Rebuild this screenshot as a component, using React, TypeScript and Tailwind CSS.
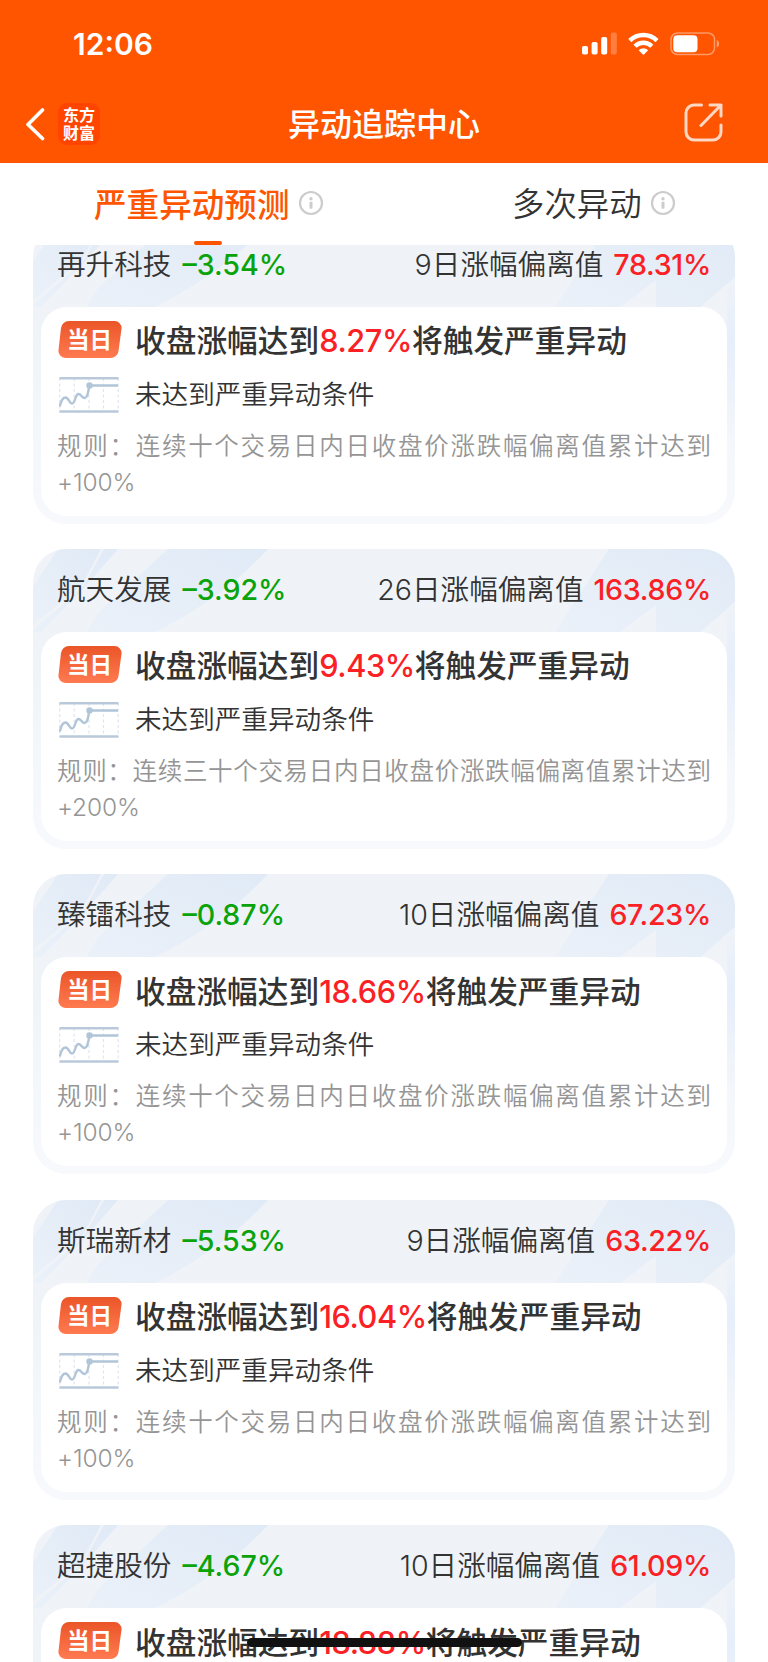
interface Stock {
    name: string;
    change: string;
    days: number;
    deviation: string;
    trigger: string;
    rule: string;
    limit: string;
}

const TEN_DAY_RULE = "规则：连续十个交易日内日收盘价涨跌幅偏离值累计达到";
const THIRTY_DAY_RULE = "规则：连续三十个交易日内日收盘价涨跌幅偏离值累计达到";

const stocks: Stock[] = [
    { name: "再升科技", change: "–3.54%", days: 9, deviation: "78.31%", trigger: "8.27%", rule: TEN_DAY_RULE, limit: "+100%" },
    { name: "航天发展", change: "–3.92%", days: 26, deviation: "163.86%", trigger: "9.43%", rule: THIRTY_DAY_RULE, limit: "+200%" },
    { name: "臻镭科技", change: "–0.87%", days: 10, deviation: "67.23%", trigger: "18.66%", rule: TEN_DAY_RULE, limit: "+100%" },
    { name: "斯瑞新材", change: "–5.53%", days: 9, deviation: "63.22%", trigger: "16.04%", rule: TEN_DAY_RULE, limit: "+100%" },
    { name: "超捷股份", change: "–4.67%", days: 10, deviation: "61.09%", trigger: "18.88%", rule: TEN_DAY_RULE, limit: "+100%" },
];

function StatusIcons() {
    return (
        <svg width="138" height="24" viewBox="0 0 138 24" fill="none">
            <rect x="0" y="14" width="6" height="8.5" rx="1.8" fill="#fff" />
            <rect x="9.6" y="10" width="6" height="12.5" rx="1.8" fill="#fff" />
            <rect x="19.2" y="5" width="6" height="17.5" rx="1.8" fill="#fff" />
            <rect x="28.8" y="0.5" width="6" height="22" rx="1.8" fill="#fff" fillOpacity="0.25" />
            <g stroke="#fff" strokeWidth="4.4">
                <path d="M47.8 8.6a19.4 19.4 0 0 1 27.2 0" />
                <path d="M53 14.2a12 12 0 0 1 16.8 0" />
            </g>
            <path d="M56.6 18.2a7 7 0 0 1 9.6 0L61.4 23z" fill="#fff" />
            <rect x="89" y="1" width="43.5" height="21.5" rx="6.5" stroke="#fff" strokeOpacity="0.4" strokeWidth="1.5" />
            <rect x="91.3" y="3.2" width="24.2" height="17" rx="4" fill="#fff" />
            <path d="M134.8 8c3 1 3 6.500 0 7.500z" fill="#fff" fillOpacity="0.45" />
        </svg>
    );
}

function BackIcon() {
    return (
        <svg width="20" height="34" viewBox="0 0 20 34" fill="none" stroke="#fff" strokeWidth="3.6" strokeLinecap="round" strokeLinejoin="round">
            <path d="M17.500 3 3 17.500l14.500 14" />
        </svg>
    );
}

function ShareIcon() {
    return (
        <svg width="40" height="40" viewBox="0 0 40 40" fill="none" stroke="#ffd8c4" strokeWidth="3" strokeLinecap="round" strokeLinejoin="round">
            <path d="M17.500 2H10a8 8 0 0 0-8 8v19a8 8 0 0 0 8 8h19a8 8 0 0 0 8-8v-7" />
            <path d="M26 2h11v11M37 2 17 22.500" />
        </svg>
    );
}

function InfoIcon() {
    return (
        <svg width="26" height="26" viewBox="0 0 26 26" fill="none">
            <circle cx="13" cy="13" r="11" stroke="#ccc" strokeWidth="2.2" />
            <circle cx="13" cy="8.700" r="1.700" fill="#ccc" />
            <rect x="11.500" y="11.800" width="3" height="7" rx="1" fill="#ccc" />
        </svg>
    );
}

function TodayBadge() {
    return (
        <div className="relative h-[37px] w-[64px]">
            <svg className="absolute inset-0" width="64" height="37" viewBox="0 0 64 37">
                <defs>
                    <linearGradient id="badge" x1="0" y1="0" x2="0" y2="1">
                        <stop offset="0" stopColor="#ea5528" />
                        <stop offset="1" stopColor="#ff7a50" />
                    </linearGradient>
                </defs>
                <path d="M11 0h45.500a7 7 0 0 1 7 8l-3 22a8 8 0 0 1-8 7H7.500a7 7 0 0 1-7-8l2.500-22a8 8 0 0 1 8-7z" fill="url(#badge)" />
            </svg>
            <span className="relative block pl-[9px] text-[22.5px] leading-[38px] font-bold text-white">当日</span>
        </div>
    );
}

function TrendIcon() {
    return (
        <svg width="60" height="36" viewBox="0 0 60 36" fill="none">
            <path d="M.7 1v34M15.200 1v34M30 1v34M44.500 1v34M59.200 1v34" stroke="#dfe5f0" strokeWidth="1.200" strokeDasharray="3 2.500" />
            <path d="M.5 1.200h59M.5 34.500h59" stroke="#b9c9da" strokeWidth="2.400" />
            <path d="M.8 29.500C2 24 4 20.500 6.500 20.500c3.500 0 3.500 6 6.500 6 3.500 0 3-9.500 6.500-9.500 3 0 3.500 4 6 4 3.500 0 3.500-7 5-12.500H59" stroke="#b0c5d8" strokeWidth="2.400" />
            <circle cx="30.500" cy="8.500" r="3.200" fill="#b0c5d8" />
        </svg>
    );
}

function CardArtwork() {
    return (
        <svg className="absolute inset-0" width="702" height="300" viewBox="0 0 702 300">
            <defs>
                <linearGradient id="base" x1="0" y1="0" x2="0" y2="1">
                    <stop offset="0" stopColor="#eff3f8" />
                    <stop offset="0.4" stopColor="#f0f4f9" />
                    <stop offset="1" stopColor="#f7f9fc" />
                </linearGradient>
                <linearGradient id="band" x1="1" y1="0" x2="0" y2="1">
                    <stop offset="0" stopColor="#e0eaf6" />
                    <stop offset="1" stopColor="#ebf1f9" />
                </linearGradient>
                <linearGradient id="edge" x1="0" y1="0" x2="0" y2="1">
                    <stop offset="0" stopColor="#eff3f9" />
                    <stop offset="0.4" stopColor="#e6eefa" />
                    <stop offset="1" stopColor="#f3f6fb" />
                </linearGradient>
            </defs>
            <rect width="702" height="300" fill="url(#base)" />
            <path d="M25 0h43L49 36 0 76V38z" fill="url(#band)" />
            <path d="M71 0h14L50 40 8 83H0v-2l50-43z" fill="url(#band)" />
            <path d="M135 0h100q-46 50-113 83H54q10-22 24-30z" fill="url(#band)" />
            <path d="M576 0h126v53l-35 30h-44V56l-36 27h-65z" fill="url(#band)" />
            <path d="M702 53v160h-8V60z" fill="url(#edge)" />
        </svg>
    );
}

function StockCard({ stock }: { stock: Stock }) {
    return (
        <article className="relative h-[300px] shrink-0 overflow-hidden rounded-[33px]">
            <CardArtwork />
            <div className="relative px-2">
                <header className="flex h-[83px] items-center justify-between pr-4 pl-4 text-[28.6px] font-[350]">
                    <h2 className="flex items-center gap-[11px]">
                        <span>{stock.name}</span>
                        <span className="font-medium text-[#0aa30a]">{stock.change}</span>
                    </h2>
                    <p className="flex items-center gap-[10px]">
                        <span>{stock.days}日涨幅偏离值</span>
                        <span className="font-medium tracking-[-0.3px] text-[#fb2024]">{stock.deviation}</span>
                    </p>
                </header>
                <section className="h-[209px] rounded-[26px] bg-white px-4 pt-[14px]">
                    <div className="flex h-[37px] items-center gap-[13px] pl-[1px]">
                        <TodayBadge />
                        <p className="pt-1 text-[30.7px] font-medium whitespace-nowrap">
                            收盘涨幅达到<span className="tracking-[-0.4px] text-[#fb2024]">{stock.trigger}</span>将触发严重异动
                        </p>
                    </div>
                    <div className="mt-[19px] flex h-9 items-center gap-4 pl-[2px]">
                        <TrendIcon />
                        <p className="text-[26.6px] font-[350]">未达到严重异动条件</p>
                    </div>
                    <div className="mt-[15px] text-[24.5px] leading-[36px] font-[350] text-[#959595]">
                        <p className="whitespace-nowrap [text-align-last:justify]">{stock.rule}</p>
                        <p className="tracking-[-0.1px]">{stock.limit}</p>
                    </div>
                </section>
            </div>
        </article>
    );
}

export default function App() {
    return (
        <div className="relative flex h-[1662px] w-[768px] flex-col overflow-hidden bg-white font-['Inter','Noto_Sans_CJK_SC',sans-serif] text-[#333]">
            <div className="h-[163px] shrink-0 bg-[#ff5500] text-white">
                <div className="flex h-[88px] items-center justify-between pr-[48px] pl-[73px]">
                    <span className="text-[30px] font-semibold">12:06</span>
                    <StatusIcons />
                </div>
                <div className="grid h-[72px] grid-cols-3 items-center px-[25px]">
                    <div className="flex items-center gap-[13px]">
                        <BackIcon />
                        <div className="flex h-[42px] w-[42px] flex-col items-center justify-center rounded-[9px] bg-[#ff4400] text-[16px] leading-[18px] font-bold">
                            <span className="block h-[18px]">东方</span>
                            <span className="block h-[18px]">财富</span>
                        </div>
                    </div>
                    <h1 className="pt-0.5 text-center text-[32px] font-medium">异动追踪中心</h1>
                    <div className="flex justify-end pr-[19px] pb-[2px]">
                        <ShareIcon />
                    </div>
                </div>
            </div>

            <nav className="flex h-[82px] shrink-0 pl-[94px] text-[32.4px]">
                <div className="flex w-[418px] flex-col">
                    <div className="flex h-[78px] items-center gap-[9px] pt-0.5">
                        <span className="pt-1 text-[32.6px] font-medium text-[#ff5500]">严重异动预测</span>
                        <InfoIcon />
                    </div>
                    <span className="ml-[100px] h-[4px] w-[28px] shrink-0 rounded-full bg-[#ff5500]" />
                </div>
                <div className="flex h-[78px] items-center gap-2 pt-0.5">
                    <span className="pt-1 font-[350]">多次异动</span>
                    <InfoIcon />
                </div>
            </nav>

            <main className="min-h-0 flex-1 overflow-hidden px-[33px]">
                <div className="-mt-[21.5px] flex flex-col gap-[25.4px]">
                    {stocks.map((stock) => (
                        <StockCard key={stock.name} stock={stock} />
                    ))}
                </div>
            </main>

            {/* iOS home indicator */}
            <div className="absolute bottom-[15px] left-[247px] h-[9px] w-[275px] rounded-full bg-[#111]" />
        </div>
    );
}
